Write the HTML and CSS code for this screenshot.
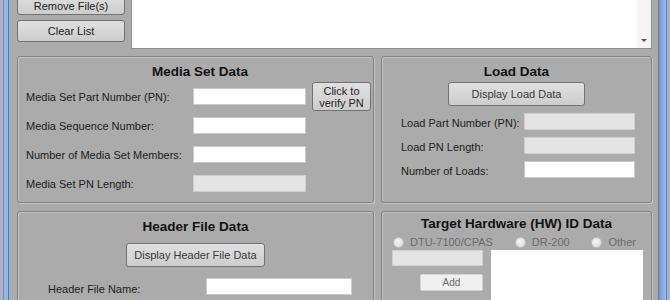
FILE: index.html
```html
<!DOCTYPE html>
<html lang="en">
<head>
    <meta charset="UTF-8">
    <title>Media Set Tool</title>
    <link rel="stylesheet" href="styles.css">
</head>
<body>
    <div class="window">
        <div class="edge"></div>
        <div class="frame-left"></div>
        <div class="client">
            <div class="file-bar">
                <div class="file-buttons">
                    <button class="btn btn-file btn-remove">Remove File(s)</button>
                    <button class="btn btn-file">Clear List</button>
                </div>
                <div class="file-list">
                    <div class="scrollbar"><span class="arrow-down"></span></div>
                </div>
            </div>

            <div class="groups">
                <section class="group">
                    <h3 class="group-title title-media">Media Set Data</h3>
                    <div class="media-rows">
                        <div class="row">
                            <label class="media-label">Media Set Part Number (PN):</label>
                            <input type="text" class="field media-field">
                            <button class="btn btn-verify">Click to<br>verify PN</button>
                        </div>
                        <div class="row">
                            <label class="media-label">Media Sequence Number:</label>
                            <input type="text" class="field media-field">
                        </div>
                        <div class="row">
                            <label class="media-label">Number of Media Set Members:</label>
                            <input type="text" class="field media-field">
                        </div>
                        <div class="row">
                            <label class="media-label">Media Set PN Length:</label>
                            <input type="text" class="field media-field" disabled>
                        </div>
                    </div>
                </section>

                <section class="group">
                    <h3 class="group-title">Load Data</h3>
                    <button class="btn btn-display btn-load">Display Load Data</button>
                    <div class="load-rows">
                        <div class="load-row">
                            <label class="load-label">Load Part Number (PN):</label>
                            <input type="text" class="field load-field" disabled>
                        </div>
                        <div class="load-row">
                            <label class="load-label">Load PN Length:</label>
                            <input type="text" class="field load-field" disabled>
                        </div>
                        <div class="load-row">
                            <label class="load-label">Number of Loads:</label>
                            <input type="text" class="field load-field">
                        </div>
                    </div>
                </section>

                <section class="group">
                    <h3 class="group-title">Header File Data</h3>
                    <button class="btn btn-display btn-header">Display Header File Data</button>
                    <div class="header-row">
                        <label class="header-label">Header File Name:</label>
                        <input type="text" class="field header-field">
                    </div>
                </section>

                <section class="group group-target">
                    <h3 class="group-title">Target Hardware (HW) ID Data</h3>
                    <div class="radios">
                        <label class="radio"><span class="dot"></span>DTU-7100/CPAS</label>
                        <label class="radio"><span class="dot"></span>DR-200</label>
                        <label class="radio"><span class="dot"></span>Other</label>
                    </div>
                    <div class="hw-body">
                        <div class="hw-left">
                            <input type="text" class="field hw-field" disabled>
                            <button class="btn-add">Add</button>
                        </div>
                        <div class="hw-list"></div>
                    </div>
                </section>
            </div>
        </div>
        <div class="frame-right"></div>
    </div>
</body>
</html>
```

FILE: styles.css
```css
* {
    box-sizing: border-box;
}
body {
    margin: 0;
    width: 670px;
    height: 300px;
    overflow: hidden;
    background: #b1b3ba;
    font-family: "Liberation Sans", Arial, sans-serif;
    font-size: 11px;
    color: #1c1c1c;
}
.window {
    display: flex;
    height: 300px;
}
.edge {
    width: 3px;
}
.frame-left {
    width: 6px;
    background: #93b7ef;
    border-left: 1px solid #6a8dcc;
    border-right: 1px solid #5878b4;
}
.frame-right {
    width: 9px;
    background: linear-gradient(90deg, #7096d8, #9dbff3);
    border-left: 1px solid #7a7a7a;
    border-right: 1px solid #5a7bbb;
}
.client {
    width: 649px;
    padding: 0 6px 0 8px;
    background: #ababab;
    overflow: hidden;
}

/* buttons */
.btn {
    font-family: inherit;
    font-size: 11px;
    color: #222;
    background: linear-gradient(#e0e0e0, #cdcdcd);
    border: 1px solid #727272;
    border-radius: 3px;
    padding: 0;
}
.btn-file {
    height: 22px;
}
.btn-remove {
    padding-top: 3px;
}
.btn-verify {
    width: 59px;
    height: 29px;
    margin-left: 6px;
    line-height: 12px;
}
.btn-display {
    display: block;
    height: 24px;
    margin: 0 auto;
    color: #3a3a3a;
}
.btn-load {
    width: 137px;
    margin-top: 2px;
}
.btn-header {
    width: 139px;
    margin-top: 8px;
}
.btn-add {
    width: 63px;
    height: 17px;
    margin-top: 8px;
    margin-left: auto;
    display: block;
    font-family: inherit;
    font-size: 10px;
    color: #6a6a6a;
    background: #efefef;
    border: 1px solid #d4d4d4;
    border-radius: 2px;
    padding: 0;
}

/* file list */
.file-bar {
    display: flex;
    gap: 6px;
    margin-top: -8px;
    height: 57px;
}
.file-buttons {
    width: 108px;
    display: flex;
    flex-direction: column;
    gap: 5px;
    padding-top: 1px;
}
.file-list {
    flex: 1;
    background: #fff;
    border: 1px solid #8e9096;
    display: flex;
    justify-content: flex-end;
}
.scrollbar {
    width: 14px;
    background: #f8f4f4;
    display: flex;
    align-items: flex-end;
    justify-content: center;
    padding-bottom: 6px;
}
.arrow-down {
    border-left: 3px solid transparent;
    border-right: 3px solid transparent;
    border-top: 3px solid #555;
}

/* group boxes */
.groups {
    display: grid;
    grid-template-columns: 357px 271px;
    grid-template-rows: 147px 120px;
    gap: 8px 7px;
    margin-top: 7px;
}
.group {
    border: 1px solid #858585;
    border-radius: 3px;
    box-shadow: inset 1px 1px 0 #c3c3c3, 1px 1px 0 #c3c3c3;
    padding-top: 7px;
}
.group-title {
    margin: 0;
    font-size: 13.5px;
    font-weight: bold;
    line-height: 16px;
    text-align: center;
    color: #111;
}
.title-media {
    padding-left: 9px;
}
.field {
    height: 17px;
    background: #fff;
    border: 1px solid #cacaca;
    padding: 0 2px;
    font-family: inherit;
    font-size: 11px;
}
.field:disabled {
    background: #e4e4e4;
    border-color: #cfcfcf;
}

.media-rows {
    margin-top: 2px;
    padding-left: 8px;
}
.row {
    display: flex;
    align-items: center;
    height: 29px;
}
.media-label {
    width: 167px;
}
.media-field {
    width: 113px;
}

.load-rows {
    margin-top: 7px;
    padding-left: 19px;
    display: flex;
    flex-direction: column;
    gap: 7px;
}
.load-row {
    display: flex;
    align-items: center;
    height: 17px;
}
.load-label {
    width: 123px;
    padding-top: 3px;
}
.load-field {
    width: 111px;
}

.header-row {
    display: flex;
    align-items: center;
    margin-top: 11px;
    padding-left: 30px;
}
.header-label {
    width: 158px;
    padding-top: 4px;
}
.header-field {
    width: 146px;
}

/* target hardware */
.group-target {
    padding-top: 4px;
}
.radios {
    display: flex;
    justify-content: space-between;
    align-items: center;
    height: 14px;
    margin-top: 3px;
    padding: 0 15px 0 11px;
}
.radio {
    display: flex;
    align-items: center;
    gap: 6px;
    font-size: 11px;
    color: #6c6c6c;
}
.dot {
    width: 11px;
    height: 11px;
    border-radius: 50%;
    background: radial-gradient(circle at 40% 40%, #f6f6f6, #d6d6d6);
    border: 1px solid #c0c0c0;
}
.hw-body {
    display: flex;
    gap: 8px;
    margin-top: 1px;
    padding: 0 8px 0 10px;
}
.hw-left {
    width: 91px;
}
.hw-field {
    width: 91px;
    height: 16px;
    display: block;
}
.hw-list {
    flex: 1;
    height: 80px;
    background: #fff;
}
```
